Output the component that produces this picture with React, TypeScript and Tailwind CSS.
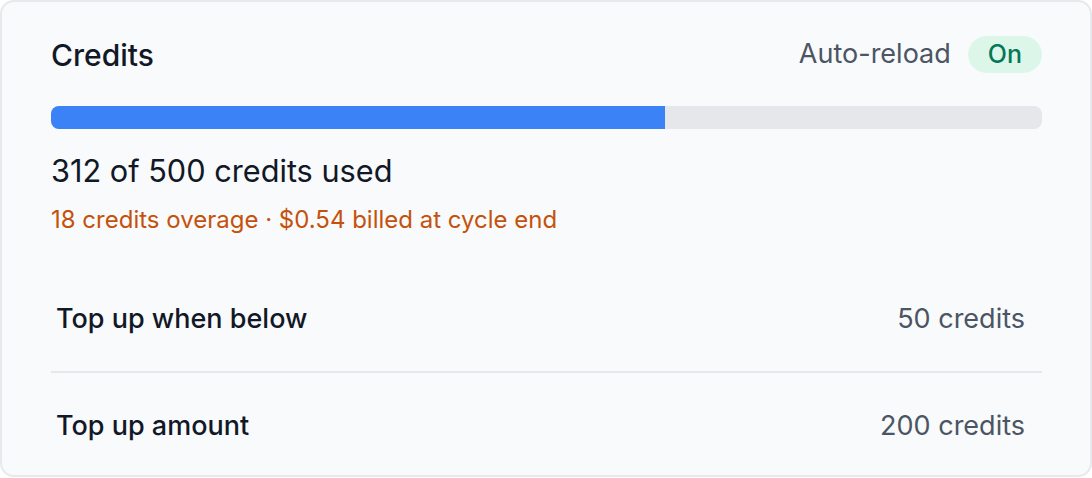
import { useState } from 'react';

interface Setting {
  label: string;
  value: string;
}

const used = 312;
const total = 500;

const settings: Setting[] = [
  { label: 'Top up when below', value: '50 credits' },
  { label: 'Top up amount', value: '200 credits' },
];

export default function App() {
  const [autoReload] = useState(true);
  const pct = (used / total) * 100;

  return (
    <div className="min-h-screen bg-white" style={{ fontFamily: 'Inter, "Noto Sans", sans-serif' }}>
      <div className="w-[1092px] h-[477px] rounded-[14px] border-2 border-[#e8e9ec] bg-[#f9fafb] pl-[49px] pr-[48px] pt-[34px]">
        <div className="flex h-[37px] items-center justify-between">
          <h2 className="text-[30px] font-medium text-[#111827] leading-none">Credits</h2>
          <div className="flex items-center gap-[17px]">
            <span className="text-[27px] text-[#4b5563]">Auto-reload</span>
            <span className="flex h-[37px] items-center rounded-full bg-[#dcf7ea] px-[20px] text-[25px] font-medium text-[#047857]">
              {autoReload ? 'On' : 'Off'}
            </span>
          </div>
        </div>

        <div className="mt-[33px] h-[23px] w-full overflow-hidden rounded-[8px] bg-[#e5e7eb]">
          <div className="h-full bg-[#3b82f6]" style={{ width: `${pct - 0.4}%` }} />
        </div>

        <p className="mt-[24px] text-[30.7px] leading-[36px] text-[#111827]">
          {used} of {total} credits used
        </p>
        <p className="mt-[15px] text-[24px] leading-[32px] text-[#c4520c]">
          18 credits overage · $0.54 billed at cycle end
        </p>

        <div className="mt-[31px]">
          {settings.map((s, i) => (
            <div
              key={s.label}
              className={
                i === 0
                  ? 'flex h-[106px] items-center justify-between border-b-2 border-[#e5e7eb] pl-[5px] pr-[17px]'
                  : 'flex h-[104px] items-center justify-between pl-[5px] pr-[17px] pt-[2px]'
              }
            >
              <span className="text-[27px] font-medium text-[#111827]">{s.label}</span>
              <span className="text-[27px] text-[#4b5563]">{s.value}</span>
            </div>
          ))}
        </div>
      </div>
    </div>
  );
}
